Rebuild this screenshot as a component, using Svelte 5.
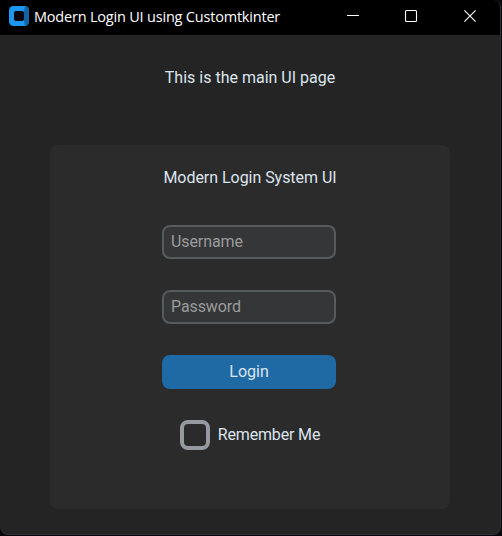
<script>
  let username = $state('');
  let password = $state('');
  let remember = $state(false);
</script>

<div class="desktop">
  <div class="window">
    <header class="titlebar">
      <svg class="logo" width="20" height="20" viewBox="0 0 20 20">
        <rect width="20" height="20" rx="4.5" fill="#1c98f2" />
        <path d="M16 0.3Q20 0.8 20 4.5V15.5Q20 19.2 16 19.7L15 14.5V5.5Z" fill="#1264a6" />
        <path d="M6.2 5H13.8L15 6.2V13.8L13.8 15H6.2L5 13.8V6.2Z" fill="#020409" />
      </svg>
      <span class="title">Modern Login UI using Customtkinter</span>
      <svg class="controls" width="132" height="14" viewBox="0 0 132 14" fill="none" stroke="#fff" stroke-width="1.1">
        <path d="M0 6.5H12" />
        <rect x="58.5" y="1.5" width="11" height="11" rx="1" />
        <path d="M117.4 1.4L128.6 12.6M128.6 1.4L117.4 12.6" />
      </svg>
    </header>

    <main>
      <div class="heading">This is the main UI page</div>
      <form class="card" onsubmit={(e) => e.preventDefault()}>
        <div class="card-title">Modern Login System UI</div>
        <input class="field" type="text" placeholder="Username" bind:value={username} />
        <input class="field" type="password" placeholder="Password" bind:value={password} />
        <button class="login">Login</button>
        <label class="remember">
          <input type="checkbox" bind:checked={remember} />
          <span>Remember Me</span>
        </label>
      </form>
    </main>
  </div>
</div>

<style>
  .desktop {
    box-sizing: border-box;
    width: 502px;
    height: 536px;
    padding: 0 1px 1px 0;
    background: #08080c;
    font-family: Roboto, 'Liberation Sans', sans-serif;
    font-size: 16px;
    line-height: 20px;
    color: #dce4ee;
  }
  .window {
    box-sizing: border-box;
    width: 501px;
    height: 535px;
    border-right: 1px solid #303033;
    border-bottom: 1px solid #303036;
    border-radius: 0 7px 8px 8px;
    overflow: hidden;
    background: #242424;
  }
  .titlebar {
    box-sizing: border-box;
    display: flex;
    align-items: center;
    height: 35px;
    padding: 0 21px 3px 9px;
    background: #000;
  }
  .logo {
    flex: none;
  }
  .title {
    margin-left: 5px;
    padding-top: 1px;
    font-family: 'Open Sans', 'Noto Sans', sans-serif;
    font-size: 14.5px;
    letter-spacing: -0.2px;
    color: #fff;
    white-space: nowrap;
  }
  .controls {
    flex: none;
    margin-left: auto;
  }
  main {
    display: flex;
    flex-direction: column;
    align-items: center;
    padding-top: 33px;
  }
  .heading {
    margin-bottom: 57px;
  }
  .card {
    box-sizing: border-box;
    display: flex;
    flex-direction: column;
    align-items: center;
    width: 400px;
    height: 364px;
    padding: 23px 2px 0 0;
    border-radius: 8px;
    background: #2b2b2b;
  }
  .card-title {
    margin: 0 0 37px 2px;
    letter-spacing: -0.04px;
  }
  .field {
    box-sizing: border-box;
    width: 174px;
    height: 34px;
    margin: 0 0 31px;
    padding: 0 7px 1px;
    border: 2px solid #565b5e;
    border-radius: 8px;
    outline: none;
    background: #343638;
    color: #dce4ee;
    font: inherit;
    letter-spacing: -0.1px;
  }
  .field::placeholder {
    color: #9b9c9c;
    opacity: 1;
  }
  .login {
    width: 174px;
    height: 34px;
    padding: 0 0 1px;
    border: 0;
    border-radius: 8px;
    background: #1f6aa5;
    color: #dce4ee;
    font: inherit;
  }
  .remember {
    display: flex;
    align-items: center;
    gap: 8px;
    margin: 31px 0 0 2px;
    letter-spacing: -0.15px;
  }
  .remember input {
    appearance: none;
    box-sizing: border-box;
    width: 30px;
    height: 30px;
    margin: 0;
    border: 4px solid #949a9f;
    border-radius: 8px;
  }
  .remember input:checked {
    background: #1f6aa5;
    border-color: #1f6aa5;
  }
</style>
